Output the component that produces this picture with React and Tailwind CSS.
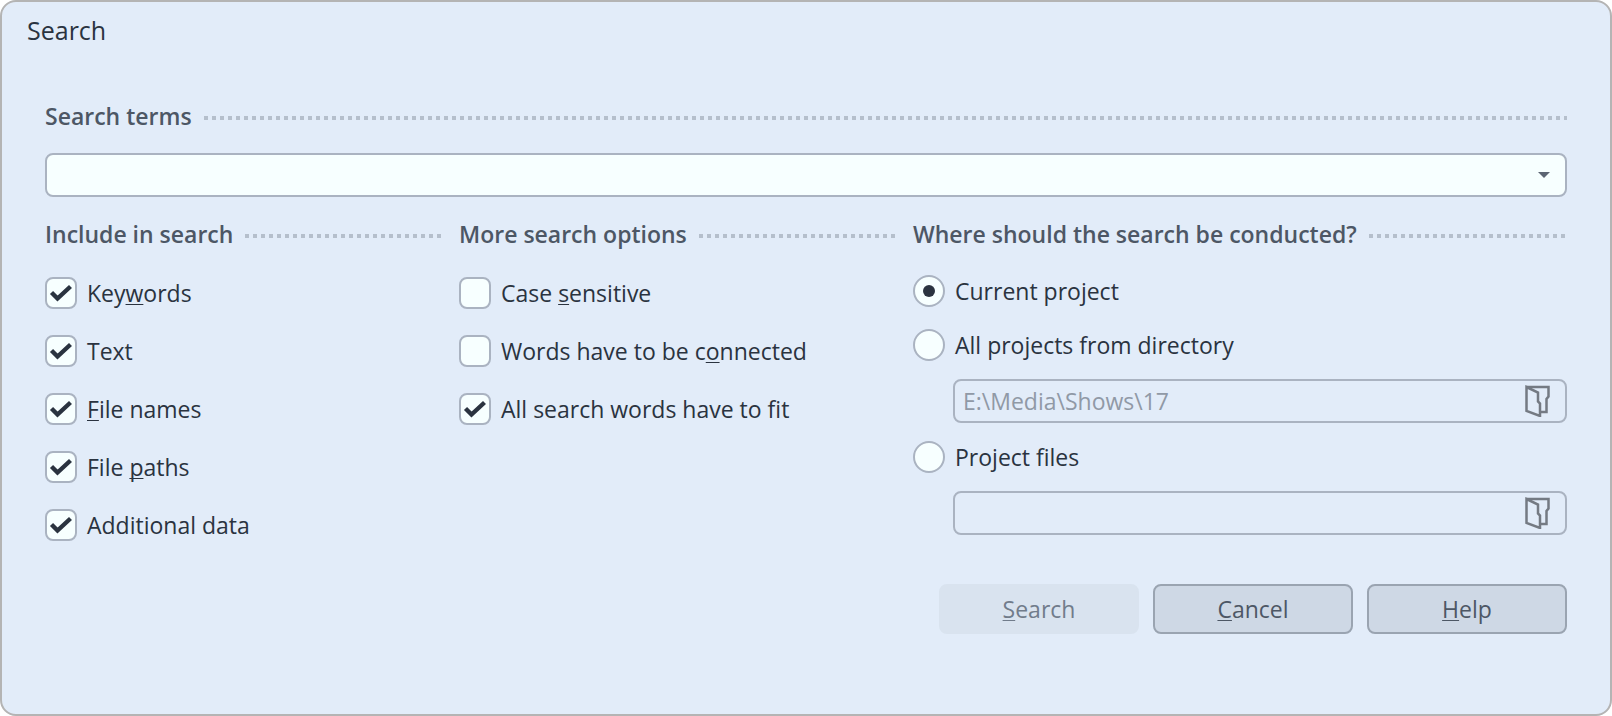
import { useState } from 'react'

const INCLUDE_OPTIONS = [
  { id: 'keywords', label: ['Key', 'w', 'ords'], checked: true },
  { id: 'text', label: ['Text'], checked: true },
  { id: 'file-names', label: ['', 'F', 'ile names'], checked: true },
  { id: 'file-paths', label: ['File ', 'p', 'aths'], checked: true },
  { id: 'additional', label: ['Additional data'], checked: true },
]

const MORE_OPTIONS = [
  { id: 'case', label: ['Case ', 's', 'ensitive'], checked: false },
  { id: 'connected', label: ['Words have to be c', 'o', 'nnected'], checked: false },
  { id: 'all-words', label: ['All search words have to fit'], checked: true },
]

// parts: [before, access key, after]
function KeyLabel({ parts }) {
  const [before, key, after] = parts
  return (
    <span className="whitespace-pre">
      {before}
      {key && <u className="decoration-1 underline-offset-2 [text-decoration-skip-ink:none]">{key}</u>}
      {after}
    </span>
  )
}

function SectionTitle({ children }) {
  return (
    <div className="flex items-center gap-3">
      <h2 className="whitespace-nowrap font-semibold text-[#4d5765]">{children}</h2>
      <div className="mt-1 h-1 flex-1 bg-[repeating-linear-gradient(90deg,#b5bfcc_0px,#b5bfcc_4px,transparent_4px,transparent_8px)]" />
    </div>
  )
}

function CheckOption({ option }) {
  return (
    <label className="flex h-8 items-center gap-[10px]">
      <span className="grid h-8 w-8 flex-shrink-0">
        <input
          type="checkbox"
          defaultChecked={option.checked}
          className="peer col-start-1 row-start-1 h-8 w-8 appearance-none rounded-lg border-2 border-[#aab3c1] bg-[#f7ffff]"
        />
        <svg
          viewBox="0 0 32 32"
          className="pointer-events-none invisible col-start-1 row-start-1 h-8 w-8 peer-checked:visible"
        >
          <path d="M6.5 15.5 L12.5 21.5 L25.5 9.5" fill="none" stroke="#2a3340" strokeWidth="4.4" />
        </svg>
      </span>
      <KeyLabel parts={option.label} />
    </label>
  )
}

function RadioOption({ label, value, selected, onSelect }) {
  return (
    <label className="flex h-8 items-center gap-[10px]">
      <span className="grid h-8 w-8 flex-shrink-0 place-items-center">
        <input
          type="radio"
          name="scope"
          value={value}
          checked={selected === value}
          onChange={() => onSelect(value)}
          className="peer col-start-1 row-start-1 h-8 w-8 appearance-none rounded-full border-2 border-[#aab3c1] bg-[#f7ffff]"
        />
        <span className="pointer-events-none invisible col-start-1 row-start-1 h-3 w-3 rounded-full bg-[#2a3340] peer-checked:visible" />
      </span>
      {label}
    </label>
  )
}

function FolderIcon() {
  return (
    <svg viewBox="0 0 26 32" className="h-8 w-[26px]" fill="none" stroke="#747a83" strokeWidth="2.5">
      <path d="M2.5 2 H24.5 V11.5 L22.5 14 V27 H17" />
      <path d="M2.5 2 L14 7.5 V16.5 L16 18.5 V31 L2.5 26 Z" />
    </svg>
  )
}

function PathField({ label, value, disabled }) {
  return (
    <div className="ml-10 flex h-11 items-center rounded-lg border-2 border-[#aab3c1] pl-2 pr-[15px]">
      <input
        type="text"
        aria-label={label}
        defaultValue={value}
        disabled={disabled}
        className="min-w-0 flex-1 bg-transparent leading-8 text-[#2a3340] outline-none disabled:text-[#9099a6]"
      />
      <button type="button" aria-label={`Browse ${label}`} disabled={disabled}>
        <FolderIcon />
      </button>
    </div>
  )
}

function DialogButton({ parts, disabled }) {
  return (
    <button
      type="button"
      disabled={disabled}
      className="h-[50px] w-[200px] rounded-lg border-2 border-[#9aa4b1] bg-[#ced8e5] text-[#4d5765] disabled:border-[#d9e3ef] disabled:bg-[#d9e3ef] disabled:text-[#717c8b]"
    >
      <KeyLabel parts={parts} />
    </button>
  )
}

export default function App() {
  const [scope, setScope] = useState('current')

  return (
    <div className="min-h-screen rounded-2xl border-2 border-[#b4b4b4] bg-[#e2ecf9] font-['Open_Sans','Noto_Sans',sans-serif] text-[23px] leading-8 text-[#2a3340]">
      <h1 className="px-[25px] pt-3 text-[25px] leading-8">Search</h1>

      <form className="px-[43px] pt-[54px]">
        <SectionTitle>Search terms</SectionTitle>
        <div className="mt-[21px] grid items-center">
          <select
            aria-label="Search terms"
            className="col-start-1 row-start-1 h-11 w-full appearance-none rounded-lg border-2 border-[#aab3c1] bg-[#f7ffff] pl-2 pr-10"
          >
            <option></option>
          </select>
          <svg
            viewBox="0 0 12 6"
            className="pointer-events-none col-start-1 row-start-1 mr-[17px] h-[6px] w-3 justify-self-end"
          >
            <path d="M0 0 H12 L6 6 Z" fill="#5c6573" />
          </svg>
        </div>

        <div className="mt-[21px] grid grid-cols-[400fr_440fr_654fr] gap-[14px]">
          <section>
            <SectionTitle>Include in search</SectionTitle>
            <div className="mt-[27px] flex flex-col gap-[26px]">
              {INCLUDE_OPTIONS.map((option) => (
                <CheckOption key={option.id} option={option} />
              ))}
            </div>
          </section>

          <section>
            <SectionTitle>More search options</SectionTitle>
            <div className="mt-[27px] flex flex-col gap-[26px]">
              {MORE_OPTIONS.map((option) => (
                <CheckOption key={option.id} option={option} />
              ))}
            </div>
          </section>

          <section>
            <SectionTitle>Where should the search be conducted?</SectionTitle>
            <div className="mt-[25px] flex flex-col gap-[18px]">
              <RadioOption label="Current project" value="current" selected={scope} onSelect={setScope} />
              <div className="mt-1 flex flex-col gap-[18px]">
                <RadioOption label="All projects from directory" value="directory" selected={scope} onSelect={setScope} />
                <PathField label="directory" value="E:\Media\Shows\17" disabled={scope !== 'directory'} />
              </div>
              <RadioOption label="Project files" value="files" selected={scope} onSelect={setScope} />
              <PathField label="project files" value="" disabled={scope !== 'files'} />
            </div>
          </section>
        </div>

        <div className="mt-[43px] flex justify-end gap-[14px] pb-8">
          <DialogButton parts={['', 'S', 'earch']} disabled />
          <DialogButton parts={['', 'C', 'ancel']} />
          <DialogButton parts={['', 'H', 'elp']} />
        </div>
      </form>
    </div>
  )
}
